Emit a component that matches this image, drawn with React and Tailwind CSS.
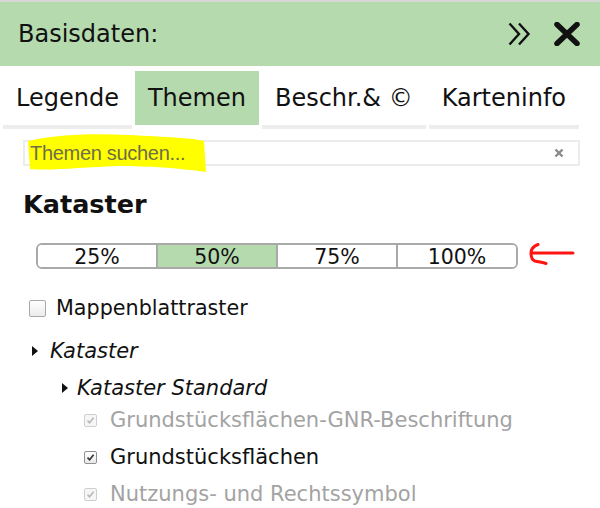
import React from "react";

const GREEN = "bg-[#b5daae]";

const tabs = [
  { label: "Legende", active: false },
  { label: "Themen", active: true },
  { label: "Beschr.& \u00a9", active: false },
  { label: "Karteninfo", active: false },
];

const segments = ["25%", "50%", "75%", "100%"];

function Check({ checked, disabled, big }) {
  if (big) {
    return (
      <span className="w-[17px] h-[17px] rounded-[2px] border border-[#a9a9a9] bg-gradient-to-b from-white to-[#ececec] shrink-0" />
    );
  }
  return (
    <span
      className={
        "w-[13px] h-[13px] rounded-[2px] border flex items-center justify-center shrink-0 " +
        (disabled ? "border-[#cfcfcf] bg-[#f6f6f6]" : "border-[#8f8f8f] bg-gradient-to-b from-white to-[#e8e8e8]")
      }
    >
      {checked && (
        <svg width="9" height="9" viewBox="0 0 9 9">
          <path
            d="M1.5 4.6 L3.6 6.8 L7.6 1.8"
            fill="none"
            stroke={disabled ? "#b9b9b9" : "#333"}
            strokeWidth="1.6"
          />
        </svg>
      )}
    </span>
  );
}

function Arrow() {
  return (
    <span className="flex items-center">
      <svg width="6" height="10" viewBox="0 0 6 10">
        <path d="M0 0 L6 5 L0 10 Z" fill="#111" />
      </svg>
    </span>
  );
}

export default function App() {
  return (
    <div className="w-[600px] h-[508px] overflow-hidden bg-white font-['DejaVu_Sans',sans-serif] text-[#111] relative">
      <div className="h-[2px] bg-[#d6d6d6]" />
      {/* header */}
      <div className={"h-[64px] flex items-center justify-between pl-[18px] pr-[20px] " + GREEN}>
        <span className="text-[24px] leading-none mt-[-1px]">Basisdaten:</span>
        <div className="flex items-center gap-[22px]">
          <svg width="24" height="24" viewBox="0 0 24 24">
            <path d="M1.5 1.5 L11 12 L1.5 22.5" fill="none" stroke="#111" strokeWidth="2.4" />
            <path d="M11 1.5 L20.5 12 L11 22.5" fill="none" stroke="#111" strokeWidth="2.4" />
          </svg>
          <svg width="26" height="24" viewBox="0 0 26 24">
            <path d="M3 2.5 L23 21.5 M23 2.5 L3 21.5" stroke="#111" strokeWidth="5.5" strokeLinecap="round" />
          </svg>
        </div>
      </div>

      {/* tabs */}
      <div className="flex gap-[3px] pl-[3px] mt-[5px]">
        {tabs.map((t) => (
          <div key={t.label} className="flex flex-col">
            <div
              className={
                "h-[54px] flex items-center px-[13px] text-[24px] " + (t.active ? GREEN : "bg-white")
              }
            >
              {t.label}
            </div>
            <div className={"h-[4px] " + (t.active ? "bg-white" : "bg-[#ededed]")} />
          </div>
        ))}
      </div>

      {/* search */}
      <div className="relative ml-[23px] mr-[20px] mt-[11px] h-[26px] border-2 border-[#ececec] flex items-center justify-between pl-[5px] pr-[14px]">
        <svg className="absolute left-[3px] top-[-8px]" width="180" height="42" viewBox="0 0 180 42">
          <path
            d="M0 7 C 25 1 60 -1 100 1 C 140 3 165 4 176 7 L 178 38 C 150 34 120 32 90 32 C 55 33 25 37 2 35 Z"
            fill="#ffff00"
          />
        </svg>
        <span className="relative font-['Liberation_Sans',sans-serif] text-[20px] text-[#6e6e48] tracking-[-0.3px]">
          Themen suchen...
        </span>
        <svg width="10" height="10" viewBox="0 0 10 10">
          <path d="M1.5 1.5 L8.5 8.5 M8.5 1.5 L1.5 8.5" stroke="#8a8a8a" strokeWidth="2.4" />
        </svg>
      </div>

      {/* heading */}
      <div className="ml-[23px] mt-[23px] h-[30px] leading-[30px] text-[25.5px] font-bold">Kataster</div>

      {/* opacity segments */}
      <div className="flex items-center mt-[24px]">
        <div className="ml-[36px] w-[482px] h-[26px] flex border-2 border-[#a9a9a9] rounded-[6px] overflow-hidden">
          {segments.map((s, i) => (
            <div
              key={s}
              className={
                "flex-1 h-[22px] leading-[25px] text-center text-[20.5px] " +
                (i > 0 ? "border-l-2 border-[#a9a9a9] " : "") +
                (i === 1 ? GREEN : "bg-white")
              }
            >
              {s}
            </div>
          ))}
        </div>
        <svg className="ml-[11px]" width="46" height="26" viewBox="0 0 46 26">
          <path
            d="M9 1.5 C 5 3 2 6 2 10 C 2 14 3 17 6 18 C 10 19 14 19.5 17 20.5 M3 10 L44 10"
            fill="none"
            stroke="#ff1414"
            strokeWidth="3"
            strokeLinecap="round"
            strokeLinejoin="round"
          />
        </svg>
      </div>

      {/* layer tree */}
      <div className="mt-[27px] flex items-center h-[24px] pl-[29px] gap-[10px] text-[20.7px] leading-[24px]">
        <Check big />
        <span>Mappenblattraster</span>
      </div>

      <div className="mt-[19px] flex items-center h-[24px] pl-[32px] gap-[12px] text-[21px] italic leading-[24px]">
        <Arrow />
        <span>Kataster</span>
      </div>

      <div className="mt-[13px] flex items-center h-[24px] pl-[62px] gap-[9px] text-[21px] italic leading-[24px]">
        <Arrow />
        <span>Kataster Standard</span>
      </div>

      <div className="mt-[8px] flex flex-col gap-[13px] pl-[84px] text-[21px] leading-[24px]">
        <div className="flex items-center h-[24px] gap-[13px] text-[#a3a3a3]">
          <Check checked disabled />
          <span>Grundstücksflächen-GNR-Beschriftung</span>
        </div>
        <div className="flex items-center h-[24px] gap-[13px]">
          <Check checked />
          <span>Grundstücksflächen</span>
        </div>
        <div className="flex items-center h-[24px] gap-[13px] text-[#a3a3a3]">
          <Check checked disabled />
          <span>Nutzungs- und Rechtssymbol</span>
        </div>
      </div>
    </div>
  );
}
